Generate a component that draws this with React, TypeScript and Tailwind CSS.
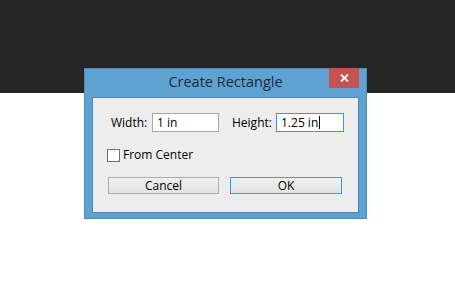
export default function App() {
  return (
    <div className="relative w-[455px] h-[294px] bg-white overflow-hidden" style={{ fontFamily: '"Open Sans", "Liberation Sans", sans-serif' }}>
      <div className="h-[93px] bg-[#262626]" />

      {/* dialog */}
      <div className="absolute left-[84px] top-[68px] w-[283px] h-[151px] bg-[#5da2d0] border border-[#4d8cbf] flex flex-col">
        <div className="relative h-[28px] flex items-center justify-center">
          <span className="text-[14.5px] text-[#1e2b3a] leading-none -mt-[2px]">Create Rectangle</span>
          <button className="absolute right-[7px] top-[-1px] w-[30px] h-[20px] bg-[#c75050] flex items-center justify-center">
            <svg width="9" height="8" viewBox="0 0 9 8">
              <path d="M1 0.5 L8 7.5 M8 0.5 L1 7.5" stroke="white" strokeWidth="1.8" />
            </svg>
          </button>
        </div>
        <div className="mx-[7px] h-[116px] bg-[#ededed] border border-[#4a86b8] text-[12px] text-black pl-[18px] pt-[15px]">
          <div className="flex items-center h-[19px]">
            <span className="w-[41px] shrink-0">Width:</span>
            <div className="w-[67px] h-[19px] shrink-0 border border-[#a6a6a6] bg-white flex items-center pl-[4px] leading-none">1 in</div>
            <span className="ml-[13px] w-[44px] shrink-0">Height:</span>
            <div className="w-[68px] h-[19px] shrink-0 border border-[#3a93e8] bg-white flex items-center pl-[4px] leading-none">
              1.25 in<span className="inline-block w-px h-[13px] bg-black ml-px" />
            </div>
          </div>
          <div className="flex items-center mt-[14px] -ml-[4px]">
            <span className="w-[13px] h-[13px] border border-[#707070] bg-white" />
            <span className="ml-[3px]">From Center</span>
          </div>
          <div className="flex mt-[13px] -ml-[3px]">
            <button className="w-[111px] h-[17px] shrink-0 border border-[#acacac] bg-gradient-to-b from-[#f0f0f0] to-[#e3e3e3] flex items-center justify-center leading-none">Cancel</button>
            <button className="ml-[11px] w-[112px] h-[17px] shrink-0 border border-[#3399ff] bg-gradient-to-b from-[#f0f0f0] to-[#e3e3e3] flex items-center justify-center leading-none">OK</button>
          </div>
        </div>
      </div>
    </div>
  );
}
